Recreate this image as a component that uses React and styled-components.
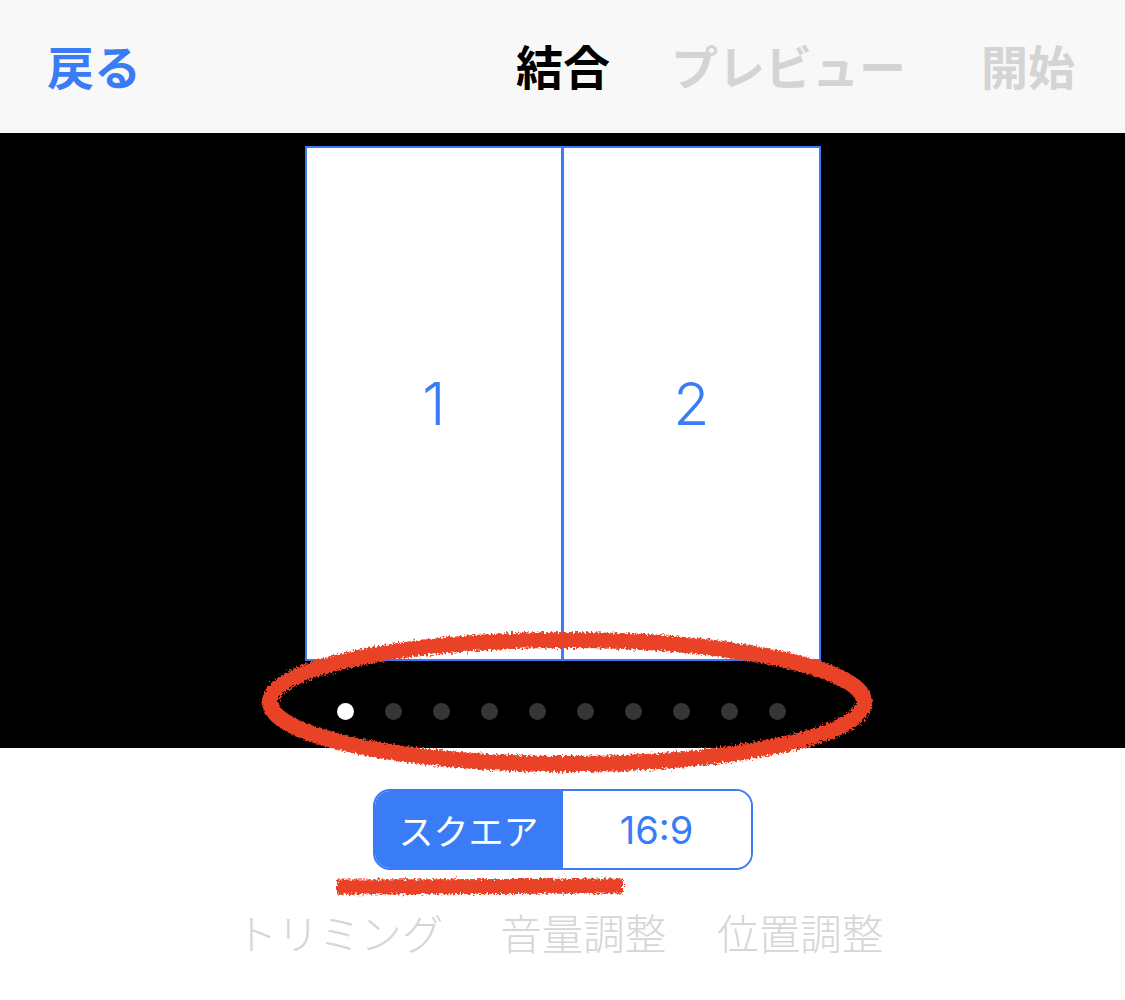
import React, { useState } from "react";
import styled, { createGlobalStyle } from "styled-components";

const GlobalStyle = createGlobalStyle`
  html, body {
    margin: 0;
    padding: 0;
    background: #ffffff;
  }
  body {
    font-family: "Noto Sans CJK JP", "Noto Sans", sans-serif;
  }
`;

const BLUE = "#3a7cf6";

const Page = styled.div`
  position: relative;
  width: 1125px;
  height: 1000px;
  overflow: hidden;
  background: #ffffff;
`;

const NavBar = styled.header`
  height: 133px;
  background: #f8f8f8;
  display: flex;
  align-items: center;
  padding: 0 50px 0 47px;
  box-sizing: border-box;
`;

const BackButton = styled.div`
  font-size: 47px;
  font-weight: 700;
  color: ${BLUE};
  flex: 1;
  line-height: 1;
  margin-top: -4px;
`;

const Steps = styled.div`
  display: flex;
  align-items: center;
  gap: 61px;
  margin-top: -4px;
`;

const Step = styled.div`
  font-size: 47px;
  font-weight: 700;
  line-height: 1;
  color: ${(p) => (p.$active ? "#000000" : "#d4d4d4")};
  margin-left: ${(p) => p.$extra || 0}px;
`;

const Stage = styled.section`
  height: 615px;
  background: #000000;
  display: flex;
  flex-direction: column;
  align-items: center;
  padding-top: 13px;
  box-sizing: border-box;
`;

const Canvas = styled.div`
  display: flex;
  width: 516px;
  height: 515px;
`;

const Tile = styled.div`
  flex: 1;
  background: #ffffff;
  border: 2px solid ${BLUE};
  border-left-width: ${(p) => (p.$first ? 2 : 1)}px;
  display: flex;
  align-items: center;
  justify-content: center;
  font-family: Inter, "Noto Sans", sans-serif;
  font-weight: 300;
  font-size: 59px;
  color: ${BLUE};
  box-sizing: border-box;
`;

const Dots = styled.div`
  display: flex;
  gap: 31px;
  margin-top: 42px;
  margin-left: -2px;
`;

const Dot = styled.span`
  width: 17px;
  height: 17px;
  border-radius: 50%;
  background: ${(p) => (p.$on ? "#ffffff" : "#363636")};
`;

const Controls = styled.section`
  display: flex;
  flex-direction: column;
  align-items: center;
  padding-top: 41px;
`;

const Segmented = styled.div`
  display: flex;
  width: 380px;
  height: 81px;
  border: 2px solid ${BLUE};
  border-radius: 17px;
  overflow: hidden;
  box-sizing: border-box;
`;

const Segment = styled.div`
  flex: 1;
  display: flex;
  align-items: center;
  justify-content: center;
  background: ${(p) => (p.$on ? BLUE : "#ffffff")};
  color: ${(p) => (p.$on ? "#ffffff" : BLUE)};
  font-size: ${(p) => (p.$latin ? 38 : 35)}px;
  font-family: Inter, "Noto Sans CJK JP", sans-serif;
`;

const Tools = styled.nav`
  display: flex;
  margin-top: 42px;
  margin-left: -6px;
`;

const Tool = styled.div`
  font-size: 41.5px;
  font-weight: 300;
  color: #d6d6d6;
  line-height: 1;
  margin-left: ${(p) => p.$gap || 0}px;
`;

const Marks = styled.svg`
  position: absolute;
  left: 0;
  top: 0;
  pointer-events: none;
`;

function App() {
  const [ratio, setRatio] = useState(0);
  const [page] = useState(0);

  return (
    <Page>
      <GlobalStyle />
      <NavBar>
        <BackButton>戻る</BackButton>
        <Steps>
          <Step $active>結合</Step>
          <Step>プレビュー</Step>
          <Step $extra={14}>開始</Step>
        </Steps>
      </NavBar>
      <Stage>
        <Canvas>
          <Tile $first>1</Tile>
          <Tile>2</Tile>
        </Canvas>
        <Dots>
          {Array.from({ length: 10 }).map((_, i) => (
            <Dot key={i} $on={i === page} />
          ))}
        </Dots>
      </Stage>
      <Controls>
        <Segmented>
          <Segment $on={ratio === 0} onClick={() => setRatio(0)}>
            スクエア
          </Segment>
          <Segment $latin $on={ratio === 1} onClick={() => setRatio(1)}>
            16:9
          </Segment>
        </Segmented>
        <Tools>
          <Tool>トリミング</Tool>
          <Tool $gap={57}>音量調整</Tool>
          <Tool $gap={51}>位置調整</Tool>
        </Tools>
      </Controls>
      {/* hand drawn red marks on top of the screenshot */}
      <Marks width="1125" height="1000" viewBox="0 0 1125 1000">
        <defs>
          <filter id="rough" x="-10%" y="-40%" width="120%" height="180%">
            <feTurbulence type="fractalNoise" baseFrequency="0.45" numOctaves="2" seed="3" />
            <feDisplacementMap in="SourceGraphic" scale="7" />
          </filter>
        </defs>
        <g filter="url(#rough)">
          <ellipse cx="567" cy="702" rx="297" ry="62" fill="none" stroke="#e94228" strokeWidth="16" />
          <path d="M337 887 L623 886" stroke="#e94228" strokeWidth="15" strokeLinecap="butt" />
        </g>
      </Marks>
    </Page>
  );
}

export default App;
